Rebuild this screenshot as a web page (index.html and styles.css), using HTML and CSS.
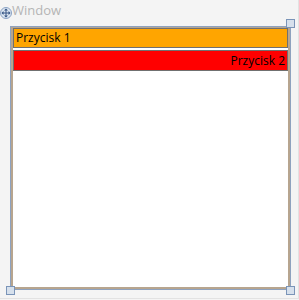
FILE: index.html
```html
<!DOCTYPE html>
<html lang="en">
<head>
    <meta charset="UTF-8">
    <title>Window</title>
    <link rel="stylesheet" href="styles.css">
</head>
<body>
    <div class="designer">
        <div class="title">Window</div>
        <div class="move-handle">
            <svg width="12" height="12" viewBox="0 0 12 12">
                <circle cx="6" cy="6" r="5.5" fill="#dbe5f1" stroke="#8aa2c4"/>
                <path d="M6 2v8M2 6h8" stroke="#3a5887" stroke-width="1"/>
                <path d="M6 1.5l-2 2h4zM6 10.5l-2-2h4zM1.5 6l2-2v4zM10.5 6l-2-2v4z" fill="#3a5887"/>
            </svg>
        </div>
        <div class="frame">
            <div class="client">
                <div class="btn btn-orange">Przycisk 1</div>
                <div class="btn btn-red">Przycisk 2</div>
            </div>
        </div>
        <span class="grip grip-tr"></span>
        <span class="grip grip-bl"></span>
        <span class="grip grip-br"></span>
    </div>
</body>
</html>
```

FILE: styles.css
```css
body {
    margin: 0;
    padding: 0;
    background-color: #f4f4f4;
    font-family: "Open Sans", "DejaVu Sans", sans-serif;
    font-size: 12px;
}
.designer {
    position: relative;
    width: 298px;
    height: 298px;
    border-right: 1px solid #e2e2e2;
    border-bottom: 1px solid #e2e2e2;
}
.title {
    padding: 2px 0 0 12px;
    height: 22px;
    color: #b4b4b4;
    font-size: 13px;
    line-height: 17px;
}
.move-handle {
    position: absolute;
    left: 0;
    top: 6px;
}
.frame {
    margin: 2px 0 0 10px;
    width: 279px;
    height: 262px;
    border: 1px solid #8ea2bf;
}
.client {
    height: 259px;
    border: 2px solid #b7a58f;
    border-top-width: 1px;
    background: #ffffff;
    display: flex;
    flex-direction: column;
    gap: 2px;
}
.btn {
    border: 1px solid #707070;
    padding: 0 2px;
    color: #000000;
}
.btn-orange {
    height: 18px;
    line-height: 18px;
    background: #ffa500;
}
.btn-red {
    height: 19px;
    line-height: 19px;
    background: #ff0000;
    text-align: right;
}
.grip {
    position: absolute;
    width: 7px;
    height: 7px;
    background: #d6e0ec;
    border: 1px solid #7a94b8;
}
.grip-tr {
    left: 286px;
    top: 19px;
}
.grip-bl {
    left: 6px;
    top: 286px;
}
.grip-br {
    left: 286px;
    top: 286px;
}
```
